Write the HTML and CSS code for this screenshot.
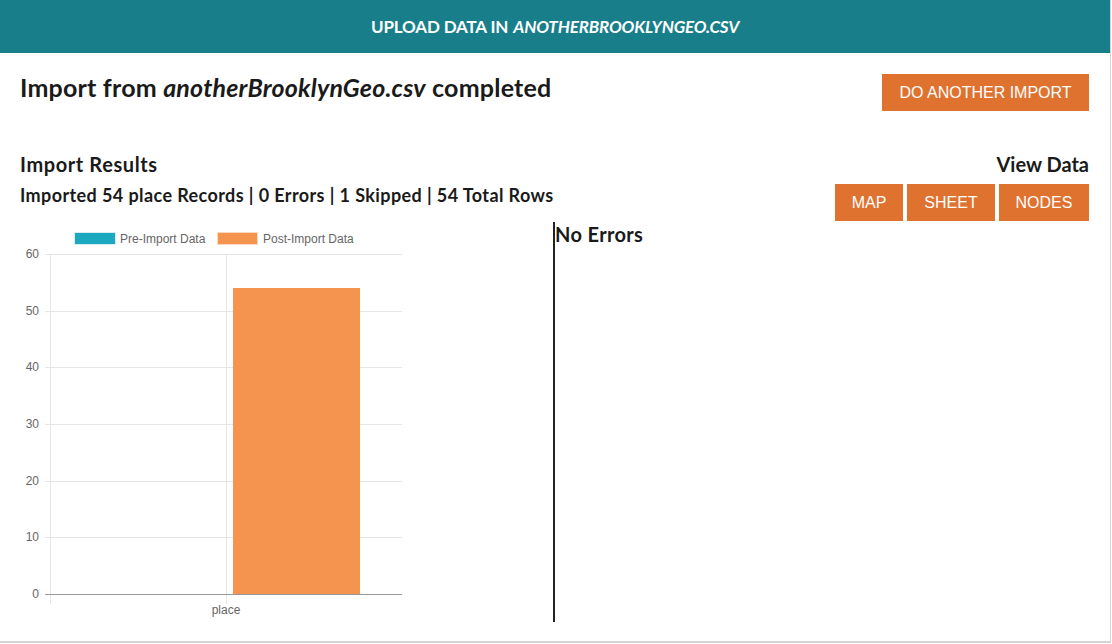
FILE: index.html
```html
<!DOCTYPE html>
<html>
<head>
<meta charset="utf-8">
<link rel="stylesheet" href="styles.css">
</head>
<body>
<div class="card">
  <header class="topbar">UPLOAD DATA IN <em>ANOTHERBROOKLYNGEO.CSV</em></header>
  <main class="content">
    <div class="row-title">
      <h1 class="title">Import from <em>anotherBrooklynGeo.csv</em> completed</h1>
      <button class="btn btn-big">DO ANOTHER IMPORT</button>
    </div>
    <div class="row-results">
      <div class="results-left">
        <h2 class="sub sub-results">Import Results</h2>
        <p class="summary">Imported 54 place Records | 0 Errors | 1 Skipped | 54 Total Rows</p>
      </div>
      <div class="results-right">
        <h2 class="sub sub-view">View Data</h2>
        <div class="btn-group">
          <button class="btn">MAP</button>
          <button class="btn">SHEET</button>
          <button class="btn">NODES</button>
        </div>
      </div>
    </div>
    <div class="row-detail">
      <div class="chart-col">
        <svg class="chart" width="533" height="400" viewBox="0 0 533 400">
          <g font-family="Liberation Sans, Arial, sans-serif" font-size="12" fill="#666">
            <rect x="54.5" y="10.5" width="41" height="12" fill="#1ba9bf" stroke="#d6eef2"/>
            <text x="100" y="21">Pre-Import Data</text>
            <rect x="197.5" y="10.5" width="40" height="12" fill="#f5944f" stroke="#fbd9c1"/>
            <text x="243" y="21">Post-Import Data</text>
          </g>
          <g stroke="#e6e6e6" stroke-width="1">
            <line x1="25" y1="32.5" x2="382" y2="32.5"/>
            <line x1="25" y1="89.5" x2="382" y2="89.5"/>
            <line x1="25" y1="145.5" x2="382" y2="145.5"/>
            <line x1="25" y1="202.5" x2="382" y2="202.5"/>
            <line x1="25" y1="259.5" x2="382" y2="259.5"/>
            <line x1="25" y1="315.5" x2="382" y2="315.5"/>
            <line x1="30.5" y1="32" x2="30.5" y2="382"/>
            <line x1="206.5" y1="32" x2="206.5" y2="382"/>
          </g>
          <rect x="213" y="66" width="127" height="306" fill="#f5944f"/>
          <line x1="25" y1="372.5" x2="382" y2="372.5" stroke="#999" stroke-width="1"/>
          <g font-family="Liberation Sans, Arial, sans-serif" font-size="12" fill="#666" text-anchor="end">
            <text x="19" y="36">60</text>
            <text x="19" y="93">50</text>
            <text x="19" y="149">40</text>
            <text x="19" y="206">30</text>
            <text x="19" y="263">20</text>
            <text x="19" y="319">10</text>
            <text x="19" y="376">0</text>
          </g>
          <text x="206" y="392" font-family="Liberation Sans, Arial, sans-serif" font-size="12" fill="#666" text-anchor="middle">place</text>
        </svg>
      </div>
      <div class="errors-col">
        <h2 class="sub sub-errors">No Errors</h2>
      </div>
    </div>
  </main>
</div>
</body>
</html>
```

FILE: styles.css
```css
* { box-sizing: border-box; }
html, body { margin: 0; padding: 0; background: #fff; }
body { font-family: "Lato", "Open Sans", sans-serif; color: #1a1a1a; }
.card {
  width: 1111px;
  height: 643px;
  border-right: 1px solid #d4d4d4;
  border-bottom: 2px solid #d4d4d4;
  background: #fff;
}
.topbar {
  height: 53px;
  background: #177e8a;
  color: #fff;
  font-weight: 700;
  font-size: 17px;
  display: flex;
  align-items: center;
  justify-content: center;
  letter-spacing: -0.15px;
}
.topbar em { font-style: italic; margin-left: 5px; }
.content { padding: 21px 21px 0 20px; }
.row-title { display: flex; justify-content: space-between; align-items: flex-start; }
.title {
  margin: -2px 0 0;
  font-size: 25px;
  font-weight: 700;
  line-height: 30px;
  letter-spacing: 0.2px;
}
.btn {
  font-family: "Liberation Sans", Arial, sans-serif;
  font-size: 16px;
  color: #fff;
  background: #e07230;
  border: none;
  border-radius: 0;
  height: 37px;
  padding: 0 17px;
  cursor: pointer;
}
.btn-big { width: 207px; padding: 0; }
.row-results {
  display: flex;
  justify-content: space-between;
  margin-top: 41px;
}
.sub {
  margin: 0;
  font-size: 20px;
  font-weight: 700;
  line-height: 24px;
}
.sub-results { letter-spacing: 0.6px; }
.sub-view { letter-spacing: 0; }
.sub-errors { letter-spacing: 0.35px; }
.summary {
  margin: 7px 0 0;
  font-size: 18px;
  font-weight: 700;
  line-height: 24px;
  letter-spacing: 0.4px;
}
.results-right { display: flex; flex-direction: column; align-items: flex-end; }
.btn-group { display: flex; gap: 4px; margin-top: 8px; }
.btn-group .btn:nth-child(1) { width: 68px; padding: 0; }
.btn-group .btn:nth-child(2) { width: 88px; padding: 0; }
.btn-group .btn:nth-child(3) { width: 90px; padding: 0; }
.row-detail { display: flex; margin-top: 1px; }
.chart-col { width: 533px; height: 400px; }
.chart { display: block; }
.errors-col {
  border-left: 2px solid #222;
  height: 400px;
  flex: 1;
  padding-top: 0;
}
```
